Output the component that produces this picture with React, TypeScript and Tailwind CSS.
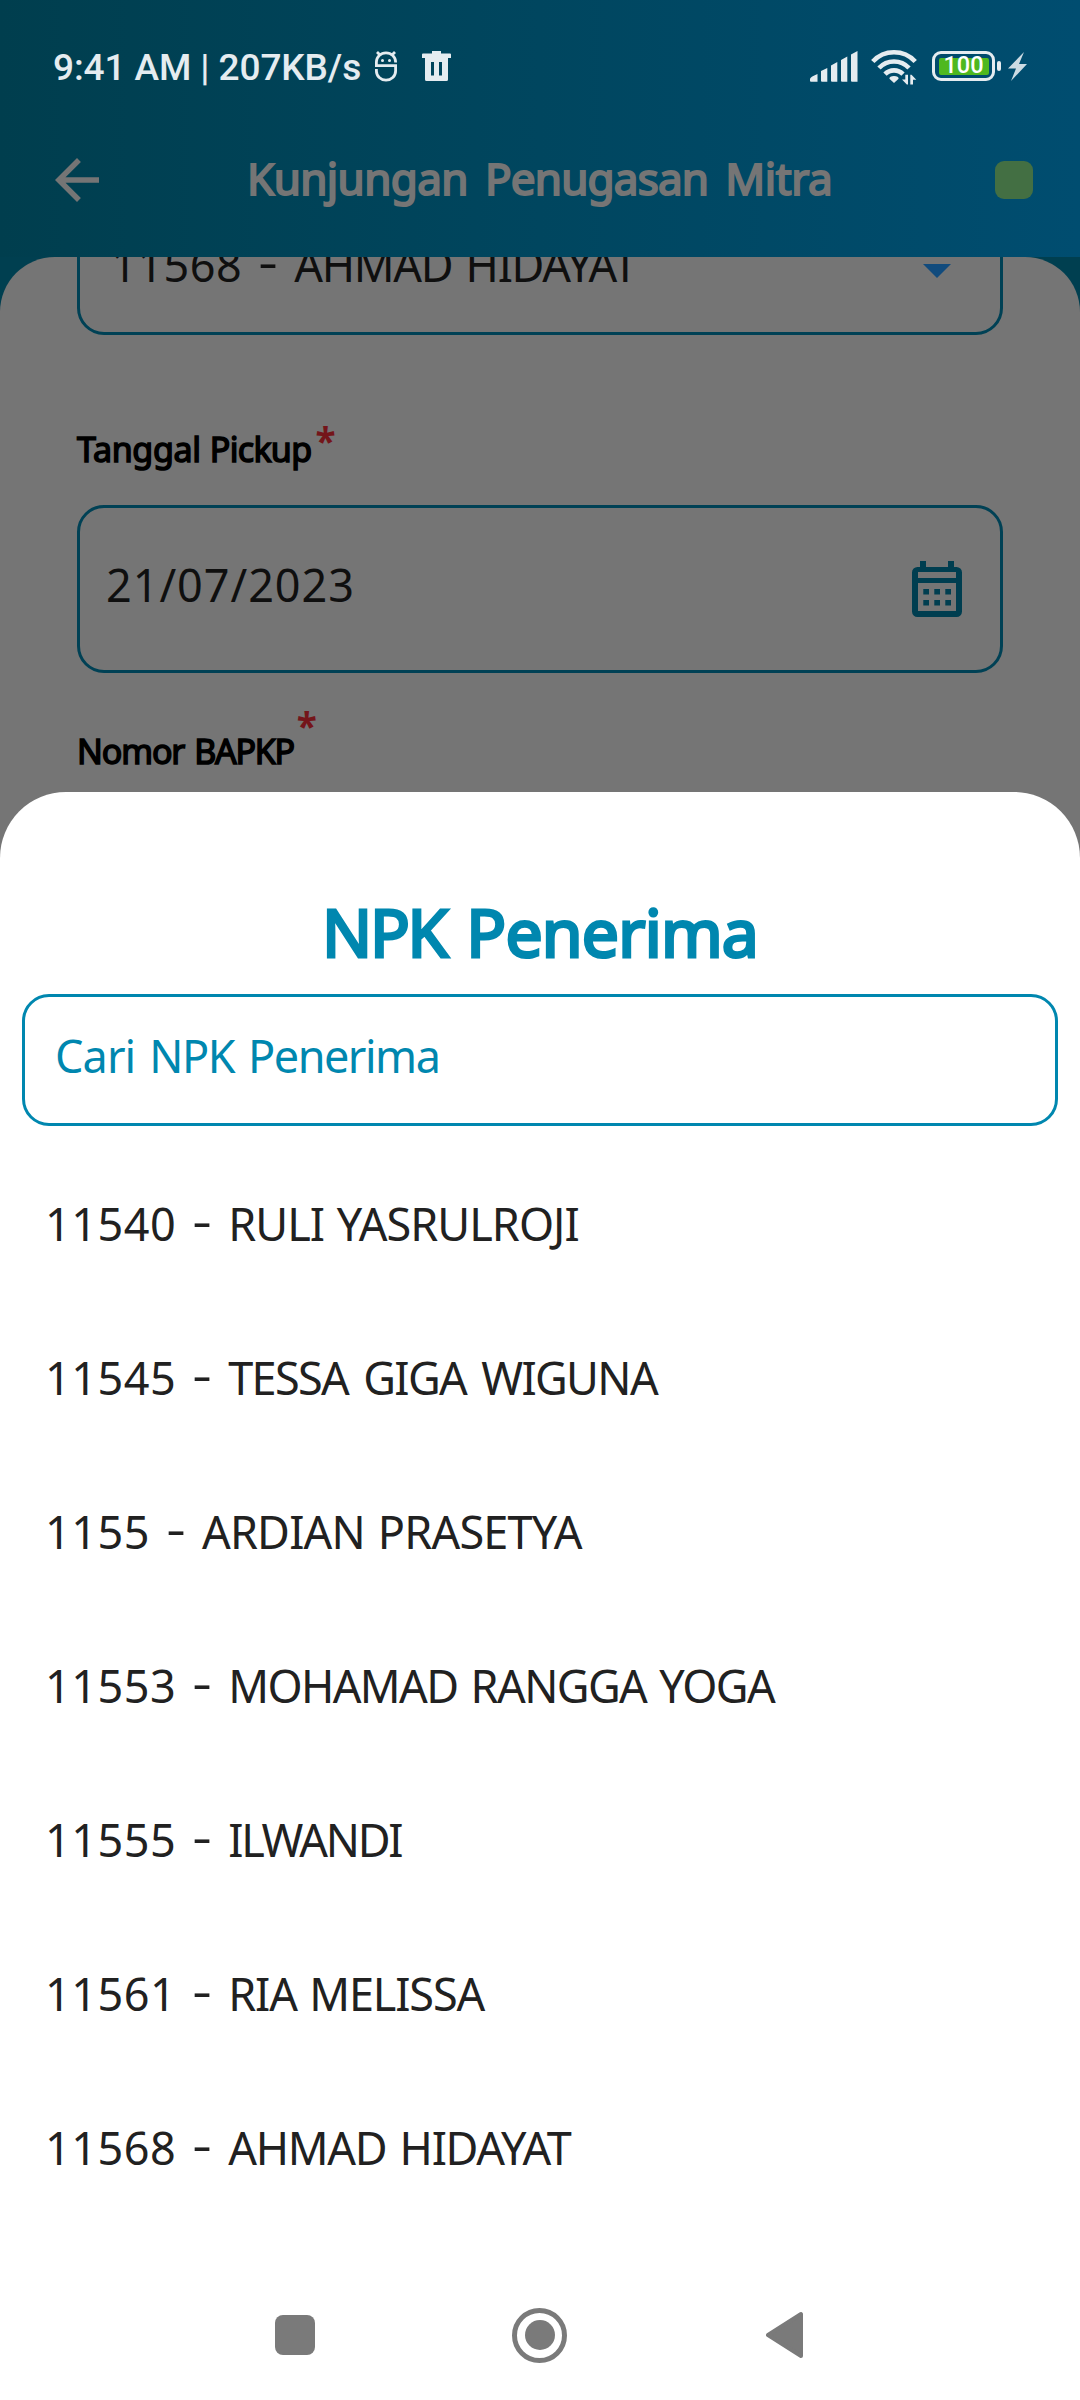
const people = [
  { npk: "11540", name: "RULI YASRULROJI", tracking: "tracking-[-0.95px] [word-spacing:2px]" },
  { npk: "11545", name: "TESSA GIGA WIGUNA", tracking: "tracking-[-1.65px] [word-spacing:5px]" },
  { npk: "1155", name: "ARDIAN PRASETYA", tracking: "tracking-[-0.8px] [word-spacing:2px]" },
  { npk: "11553", name: "MOHAMAD RANGGA YOGA", tracking: "tracking-[-1.6px] [word-spacing:3px]" },
  { npk: "11555", name: "ILWANDI", tracking: "tracking-[-2.3px]" },
  { npk: "11561", name: "RIA MELISSA", tracking: "tracking-[-1.15px] [word-spacing:2px]" },
  { npk: "11568", name: "AHMAD HIDAYAT", tracking: "tracking-[-1.3px] [word-spacing:3px]" },
];

function Person({ npk, name, tracking }: { npk: string; name: string; tracking: string }) {
  return (
    <span className="flex whitespace-pre text-[45px]">
      <span className="tracking-[0.5px]">{npk}</span>
      <span className="-mt-[4px] ml-[16px] mr-[16px] inline-block w-[20px] origin-center scale-x-135 text-center">-</span>
      <span className={tracking}>{name}</span>
    </span>
  );
}

function StatusBar() {
  return (
    <div className="flex h-[103px] items-start pl-[53px] pt-[45px] text-[#e5ecf0]">
      <span className="mt-[1px] w-[322px] whitespace-pre font-[Roboto] text-[37px] font-medium leading-[44px] tracking-[-0.1px]">
        9:41 AM | 207KB/s
      </span>
      <svg className="mt-[6px] h-[31px] w-[22px]" viewBox="0 0 22 31" fill="none" stroke="currentColor" strokeWidth="2.8">
        <path d="M20.600 11.500V11A9.600 9.200 0 0 0 1.400 11v3.700h19.200v5.300a9.600 9.200 0 0 1-19.200 0v-2M5 4 2 1M17 4l3-3" />
        <circle cx="7.5" cy="9.500" r="1.500" fill="currentColor" stroke="none" />
        <circle cx="14.5" cy="9.500" r="1.500" fill="currentColor" stroke="none" />
      </svg>
      <svg className="ml-[25px] mt-[6px] h-[30px] w-[29px]" viewBox="0 0 29 30" fill="currentColor">
        <path fillRule="evenodd" d="M10 0h9v2.5h9a1 1 0 0 1 1 1V7h-3v21.500a1.500 1.500 0 0 1-1.500 1.500H4.500A1.500 1.500 0 0 1 3 28.500V7H0V3.500a1 1 0 0 1 1-1h9zM9 11v13.500h3V11zM17 11v13.500h3V11z" />
      </svg>
      <svg className="ml-[359px] mt-[6px] h-[31px] w-[48px]" viewBox="0 0 48 31" fill="currentColor">
        <path d="M0 28q0-2 7.500-5v7.800H1q-1 0-1-1zM11 20l6.300-3v13.800H12q-1 0-1-1zM21 14.500l6.300-3.500v19.800H22q-1 0-1-1zM31 9l6.300-3.500v25.300H32q-1 0-1-1zM41 3.500l6.500-3.500v30.800H42q-1 0-1-1z" />
      </svg>
      <svg className="ml-[13px] mt-[4px] h-[36px] w-[46px]" viewBox="0 0 46 36" fill="none" stroke="currentColor" strokeWidth="4.600">
        <path d="M1.800 12.500a29 29 0 0 1 42.400 0M8 19a20.500 20.500 0 0 1 30 0M14 25.200a12.500 12.500 0 0 1 18 0" />
        <path d="M23 34l-4.600-4.200q0-2.800 4.600-2.800t4.600 2.800z" fill="currentColor" stroke="none" />
        <path d="M37 25.800v9.600h-1.200L31 30.500h3.300v-4.700zM39.300 35.400v-9.600h1.200l4.800 4.900H42v4.700z" fill="currentColor" stroke="none" />
      </svg>
      <div className="ml-[15px] mt-[6px] flex h-[30px] w-[63px] rounded-[9px] border-[3px] border-current p-[3.500px]">
        <div className="flex flex-1 items-center justify-center rounded-[2px] bg-[#4fb81f] font-[Roboto] text-[23.500px] font-medium leading-none text-white">
          100
        </div>
      </div>
      <div className="ml-[2px] mt-[16px] h-[10px] w-[4px] rounded-[2px] bg-current" />
      <svg className="ml-[7px] mt-[7px] h-[29px] w-[19px] text-[#ccdbe3]" viewBox="0 0 19 29" fill="currentColor">
        <path d="M16 0 0 16.500h8L3 29l16-17h-8z" />
      </svg>
    </div>
  );
}

function AppBar() {
  return (
    <div className="flex h-[154px] items-center pl-[44px] pr-[47px] text-[#757575]">
      <svg className="h-[66px] w-[66px]" viewBox="0 0 24 24" fill="currentColor">
        <path d="M20 11H7.830l5.590-5.590L12 4l-8 8 8 8 1.410-1.410L7.830 13H20v-2z" />
      </svg>
      <h1 className="-mt-[4px] ml-[137px] flex flex-1 gap-[17px] whitespace-pre text-[44px] [-webkit-text-stroke:2px_currentColor]">
        <span className="tracking-[-0.6px]">Kunjungan</span>
        <span className="tracking-[-0.8px]">Penugasan</span>
        <span className="tracking-[-0.4px]">Mitra</span>
      </h1>
      <div className="h-[38px] w-[38px] rounded-[9px] bg-[#436f43]" />
    </div>
  );
}

function CalendarIcon() {
  return (
    <svg className="h-[56px] w-[50px] text-[#003e50]" viewBox="0 0 50 56" fill="currentColor">
      <path
        fillRule="evenodd"
        d="M8 0h6v6h22V0h6v6h2.500a5.500 5.500 0 0 1 5.500 5.500v39a5.500 5.500 0 0 1-5.500 5.500h-39A5.500 5.500 0 0 1 0 50.500v-39A5.500 5.500 0 0 1 5.500 6H8zM6 11v6h38v-6zM6 22v28h38V22z"
      />
      <path d="M11.300 28H17v5.500h-5.700zM22.300 28H28v5.500h-5.700zM33.300 28H39v5.500h-5.700zM11.300 39H17v5.500h-5.700zM22.300 39H28v5.500h-5.700zM33.300 39H39v5.500h-5.700z" />
    </svg>
  );
}

function PickupForm() {
  return (
    <div className="h-[700px] overflow-hidden rounded-t-[55px] bg-[#757575] pl-[77px] pr-[77px]">
      <div className="-mt-[83px] flex h-[161px] items-center justify-between rounded-[27px] border-[3px] border-[#004155] pl-[31px] pr-[49px] pt-[20px] text-[#0f0f0f]">
        <Person npk="11568" name="AHMAD HIDAYAT" tracking="tracking-[-1.3px] [word-spacing:3px]" />
        <svg className="mt-[12px] h-[14px] w-[28px] text-[#114b7d]" viewBox="0 0 28 14" fill="currentColor">
          <path d="M0 0h28L14 14z" />
        </svg>
      </div>
      <div className="mt-[89px] flex whitespace-pre text-[34px] leading-[50px] text-black [-webkit-text-stroke:1.500px_currentColor]">
        <span className="tracking-[-0.3px]">Tanggal</span>
        <span className="ml-[9px] tracking-[-0.7px]">Pickup</span>
        <span className="relative -top-[8px] ml-[4px] text-[37px] font-bold text-[#74151a] [-webkit-text-stroke:0]">*</span>
      </div>
      <div className="mt-[31px] flex h-[168px] items-center justify-between rounded-[27px] border-[3px] border-[#004155] pl-[26px] pr-[38px] text-[#0f0f0f]">
        <span className="-mt-[8px] text-[45px] tracking-[0.95px]">21/07/2023</span>
        <CalendarIcon />
      </div>
      <div className="mt-[53px] flex whitespace-pre text-[34px] leading-[50px] text-black [-webkit-text-stroke:1.500px_currentColor]">
        <span className="tracking-[-1.1px]">Nomor</span>
        <span className="ml-[10px] tracking-[-1.3px]">BAPKP</span>
        <span className="relative -top-[25px] ml-[3px] text-[37px] font-bold text-[#74151a] [-webkit-text-stroke:0]">*</span>
      </div>
    </div>
  );
}

function RecipientSheet() {
  return (
    <section className="absolute inset-x-0 bottom-0 flex h-[1608px] flex-col rounded-t-[66px] bg-white px-[22px] pt-[89px] text-[#212121]">
      <h2 className="flex justify-center gap-[20px] whitespace-pre text-[66px] leading-[100px] text-[#0087af] [-webkit-text-stroke:3px_currentColor]">
        <span className="tracking-[-2.2px]">NPK</span>
        <span className="tracking-[-0.8px]">Penerima</span>
      </h2>
      <div className="mt-[13px] flex h-[132px] gap-[14px] whitespace-pre rounded-[27px] border-[3px] border-[#0087af] pl-[30px] text-[45px] leading-[117px] text-[#0087af]">
        <span className="tracking-[-0.9px]">Cari</span>
        <span className="tracking-[-1.5px]">NPK</span>
        <span className="tracking-[-1.5px]">Penerima</span>
      </div>
      <ul className="mt-[20px] pl-[23px]">
        {people.map((p) => (
          <li key={p.npk} className="flex h-[154px] items-center pt-[1px]">
            <Person {...p} />
          </li>
        ))}
      </ul>
      <nav className="mt-auto flex h-[130px] items-center pl-[253px] text-[#7a7a7a]">
        <div className="h-[40px] w-[40px] rounded-[8px] bg-current" />
        <div className="ml-[197px] flex h-[55px] w-[55px] items-center justify-center rounded-full border-[5px] border-current">
          <div className="h-[30px] w-[30px] rounded-full bg-current" />
        </div>
        <svg className="ml-[199px] h-[48px] w-[37px]" viewBox="0 0 37 48" fill="currentColor" stroke="currentColor" strokeWidth="4" strokeLinejoin="round">
          <path d="M2 24 35 3v42z" />
        </svg>
      </nav>
    </section>
  );
}

export default function App() {
  return (
    <main className="relative h-[2400px] w-[1080px] overflow-hidden bg-[#003f50] font-['Noto_Sans',sans-serif]">
      <header className="h-[257px] bg-linear-to-r from-[#003e4e] via-[#00465f] to-[#004d70]">
        <StatusBar />
        <AppBar />
      </header>
      <PickupForm />
      <RecipientSheet />
    </main>
  );
}
